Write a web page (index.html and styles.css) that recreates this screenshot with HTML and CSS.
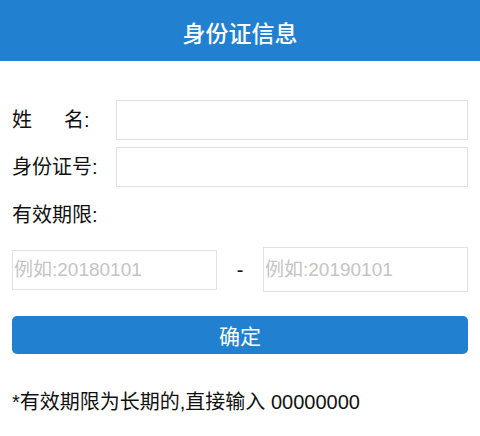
FILE: index.html
```html
<!DOCTYPE html>
<html lang="zh-CN">
<head>
<meta charset="utf-8">
<title>身份证信息</title>
<link rel="stylesheet" href="styles.css">
</head>
<body>
<header class="topbar">身份证信息</header>
<main class="form">
  <div class="row">
    <label class="label label-name"><span>姓</span><span>名:</span></label>
    <input class="field" type="text">
  </div>
  <div class="row">
    <label class="label">身份证号:</label>
    <input class="field" type="text">
  </div>
  <div class="section-label">有效期限:</div>
  <div class="date-row">
    <input class="date date-start" type="text" placeholder="例如:20180101">
    <span class="dash">-</span>
    <input class="date date-end" type="text" placeholder="例如:20190101">
  </div>
  <button class="submit" type="button">确定</button>
  <p class="note">*有效期限为长期的,直接输入 00000000</p>
</main>
</body>
</html>
```
FILE: styles.css
```css
* { box-sizing: border-box; }
body {
  margin: 0;
  background: #fff;
  font-family: "Liberation Sans", "Noto Sans CJK SC", sans-serif;
  color: #111;
}
.topbar {
  height: 61px;
  background: #2180d0;
  color: #fff;
  font-size: 23px;
  font-weight: 500;
  display: flex;
  align-items: center;
  justify-content: center;
  padding-top: 2px;
}
.form {
  padding: 39px 12px 0;
}
.row {
  display: flex;
  align-items: center;
  margin-bottom: 7px;
}
.label {
  width: 104px;
  flex: none;
  font-size: 20px;
  line-height: 28px;
}
.label-name {
  display: flex;
  gap: 32px;
}
.field {
  flex: 1;
  height: 40px;
  border: 1px solid #e2e2e2;
  border-radius: 0;
  outline: none;
  font: inherit;
  padding: 0 4px;
}
.section-label {
  font-size: 20px;
  line-height: 28px;
  margin-top: 14px;
}
.date-row {
  display: grid;
  grid-template-columns: 205px 1fr 205px;
  align-items: center;
  margin-top: 18px;
  height: 45px;
}
.date {
  height: 40px;
  border: 1px solid #e2e2e2;
  border-radius: 0;
  outline: none;
  font-family: inherit;
  font-size: 19px;
  padding: 0 1px;
  width: 100%;
}
.date-end { height: 45px; }
.date::placeholder { color: #c4c4c4; }
.dash {
  text-align: center;
  font-size: 20px;
  line-height: 1;
}
.submit {
  display: block;
  width: 100%;
  height: 38px;
  margin-top: 24px;
  border: none;
  border-radius: 5px;
  background: #2180d0;
  color: #fff;
  font-family: inherit;
  font-size: 21px;
  padding: 0;
}
.note {
  margin: 34px 0 0;
  font-size: 20px;
  line-height: 28px;
}
```
